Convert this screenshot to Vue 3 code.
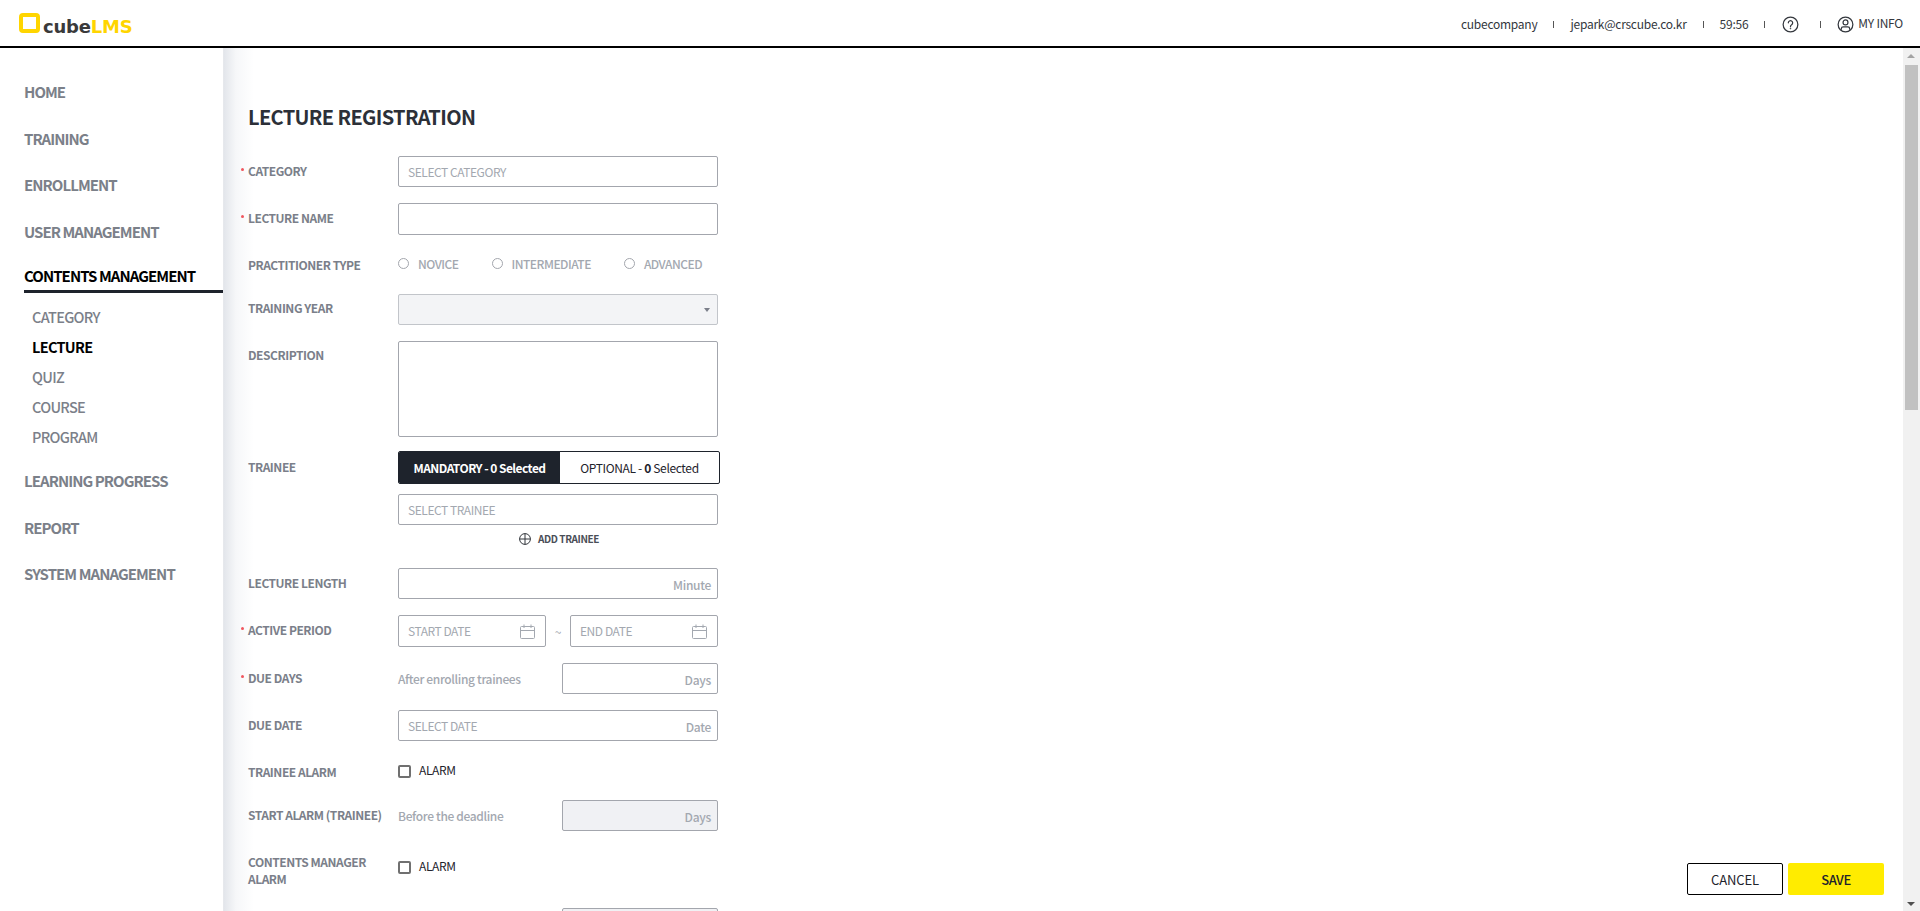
<template>
  <div class="app">
    <header class="topbar">
      <div class="logo">
        <span class="logo-mark"></span>
        <span class="logo-text">cube<b>LMS</b></span>
      </div>
      <div class="top-right">
        <span class="top-item">cubecompany</span>
        <i class="sep"></i>
        <span class="top-item">jepark@crscube.co.kr</span>
        <i class="sep"></i>
        <span class="top-item">59:56</span>
        <i class="sep"></i>
        <svg class="top-icon help" viewBox="0 0 18 18" fill="none" stroke="#33373d" stroke-width="1.3">
          <circle cx="9" cy="9" r="7.8" />
          <path d="M6.7 7.2a2.3 2.3 0 1 1 3.5 2c-.8.5-1.2 1-1.2 1.8v.3" stroke-linecap="round" />
          <circle cx="9" cy="13.3" r=".5" fill="#33373d" stroke-width=".6" />
        </svg>
        <i class="sep"></i>
        <span class="my-info">
          <svg class="top-icon" viewBox="0 0 18 18" fill="none" stroke="#33373d" stroke-width="1.3">
            <circle cx="9" cy="9" r="7.8" />
            <circle cx="9" cy="6.8" r="2.6" />
            <path d="M4.6 14.6v-1.2c0-1 .9-1.9 2-1.9h4.8c1.1 0 2 .9 2 1.9v1.2" />
          </svg>
          MY INFO
        </span>
      </div>
    </header>

    <div class="body">
      <nav class="sidebar">
        <template v-for="item in nav" :key="item.label">
          <a :class="['nav-item', { active: item.children }]">{{ item.label }}</a>
          <div v-if="item.children" class="sub-nav">
            <a
              v-for="sub in item.children"
              :key="sub"
              :class="['sub-item', { current: sub === 'LECTURE' }]"
            >{{ sub }}</a>
          </div>
        </template>
      </nav>

      <main class="content">
        <h1 class="title">LECTURE REGISTRATION</h1>

        <div class="row">
          <label class="lbl req">CATEGORY</label>
          <div class="box"><input placeholder="SELECT CATEGORY" /></div>
        </div>
        <div class="row tall">
          <label class="lbl req">LECTURE NAME</label>
          <div class="box"><input /></div>
        </div>
        <div class="row type-row">
          <label class="lbl">PRACTITIONER TYPE</label>
          <div class="radios">
            <span v-for="r in levels" :key="r" class="radio"><i></i>{{ r }}</span>
          </div>
        </div>
        <div class="row year-row">
          <label class="lbl">TRAINING YEAR</label>
          <div class="box disabled select"><span class="caret"></span></div>
        </div>
        <div class="row desc-row">
          <label class="lbl">DESCRIPTION</label>
          <div class="box area"></div>
        </div>
        <div class="row toggle-row">
          <label class="lbl">TRAINEE</label>
          <div class="toggle">
            <span class="tab on">MANDATORY - 0 Selected</span>
            <span class="tab">OPTIONAL - <b>0</b> Selected</span>
          </div>
        </div>
        <div class="row trainee-row">
          <span class="lbl"></span>
          <div class="box"><input placeholder="SELECT TRAINEE" /></div>
        </div>
        <div class="add-row">
          <svg viewBox="0 0 12 12" fill="none" stroke="#33373d" stroke-width="1">
            <circle cx="6" cy="6" r="5.4" />
            <path d="M6 .6v10.8M.6 6h10.8" />
          </svg>
          ADD TRAINEE
        </div>
        <div class="row">
          <label class="lbl">LECTURE LENGTH</label>
          <div class="box"><input /><span class="unit">Minute</span></div>
        </div>
        <div class="row tall">
          <label class="lbl req">ACTIVE PERIOD</label>
          <div class="dates">
            <div class="box">
              <input placeholder="START DATE" />
              <svg class="cal" viewBox="0 0 15 15" fill="none" stroke="#a3a8b0" stroke-width="1">
                <rect x=".5" y="2.5" width="14" height="12" rx="1" />
                <path d="M.5 6.5h14M4 .5v3.5M11 .5v3.5" />
              </svg>
            </div>
            <span class="tilde">~</span>
            <div class="box">
              <input placeholder="END DATE" />
              <svg class="cal" viewBox="0 0 15 15" fill="none" stroke="#a3a8b0" stroke-width="1">
                <rect x=".5" y="2.5" width="14" height="12" rx="1" />
                <path d="M.5 6.5h14M4 .5v3.5M11 .5v3.5" />
              </svg>
            </div>
          </div>
        </div>
        <div class="row">
          <label class="lbl req">DUE DAYS</label>
          <div class="split">
            <span class="hint">After enrolling trainees</span>
            <div class="box small"><input /><span class="unit">Days</span></div>
          </div>
        </div>
        <div class="row">
          <label class="lbl">DUE DATE</label>
          <div class="box"><input placeholder="SELECT DATE" /><span class="unit">Date</span></div>
        </div>
        <div class="row check-row">
          <label class="lbl">TRAINEE ALARM</label>
          <span class="check"><i></i>ALARM</span>
        </div>
        <div class="row">
          <label class="lbl">START ALARM (TRAINEE)</label>
          <div class="split">
            <span class="hint">Before the deadline</span>
            <div class="box small disabled"><input disabled /><span class="unit">Days</span></div>
          </div>
        </div>
        <div class="row manager-row">
          <label class="lbl">CONTENTS MANAGER<br />ALARM</label>
          <span class="check"><i></i>ALARM</span>
        </div>
        <div class="row">
          <span class="lbl"></span>
          <div class="split">
            <span class="hint"></span>
            <div class="box small disabled"></div>
          </div>
        </div>

        <div class="actions">
          <button class="btn cancel">CANCEL</button>
          <button class="btn save">SAVE</button>
        </div>

        <div class="scrollbar">
          <span class="arrow up"></span>
          <span class="thumb"></span>
          <span class="arrow down"></span>
        </div>
      </main>
    </div>
  </div>
</template>

<script setup>
const nav = [
  { label: 'HOME' },
  { label: 'TRAINING' },
  { label: 'ENROLLMENT' },
  { label: 'USER MANAGEMENT' },
  { label: 'CONTENTS MANAGEMENT', children: ['CATEGORY', 'LECTURE', 'QUIZ', 'COURSE', 'PROGRAM'] },
  { label: 'LEARNING PROGRESS' },
  { label: 'REPORT' },
  { label: 'SYSTEM MANAGEMENT' }
]

const levels = ['NOVICE', 'INTERMEDIATE', 'ADVANCED']
</script>

<style>
html, body { margin: 0; overflow: hidden; background: #fff; }
</style>

<style scoped>
.app {
  height: 911px;
  display: flex;
  flex-direction: column;
  overflow: hidden;
  font-family: "Noto Sans CJK KR", "Noto Sans", sans-serif;
  color: #2c3038;
}

.topbar {
  height: 46px;
  flex: none;
  border-bottom: 2px solid #000;
  display: flex;
  justify-content: space-between;
  align-items: center;
  padding: 0 17px 0 19px;
  background: #fff;
}
.logo { display: flex; align-items: center; gap: 3px; }
.logo-mark {
  width: 21px;
  height: 20px;
  box-sizing: border-box;
  border: 4px solid #ffd500;
  border-radius: 4px;
}
.logo-text {
  font-family: "DejaVu Sans", sans-serif;
  font-weight: 700;
  font-size: 18px;
  line-height: 20px;
  letter-spacing: -0.2px;
  color: #3a3a3a;
  margin-top: 7px;
}
.logo-text b { color: #ffd500; }

.top-right {
  display: flex;
  align-items: center;
  font-size: 12px;
  letter-spacing: -0.25px;
  color: #33373d;
}
.top-item { line-height: 18px; margin-top: 1px; }
.sep {
  width: 1px;
  height: 7px;
  background: #555;
  margin: 2px 16px 0;
}
.top-icon { width: 17px; height: 17px; flex: none; margin-top: 3px; }
.help { margin-right: 5px; margin-left: 1px; }
.my-info { display: flex; align-items: center; gap: 4px; line-height: 18px; }

.body { flex: 1; display: flex; min-height: 0; }

.sidebar {
  width: 223px;
  flex: none;
  box-sizing: border-box;
  padding-top: 21px;
  background: #fff;
}
.nav-item {
  display: block;
  height: 46.5px;
  line-height: 46px;
  margin-left: 24px;
  font-size: 15px;
  font-weight: 700;
  letter-spacing: -0.95px;
  color: #7b8089;
}
.nav-item.active {
  height: 38px;
  color: #000;
  border-bottom: 3px solid #1e232c;
  line-height: 42px;
  box-sizing: border-box;
}
.sub-nav { padding: 9px 0 6px 32px; }
.sub-item {
  display: block;
  height: 30px;
  line-height: 30px;
  font-size: 14.5px;
  font-weight: 500;
  letter-spacing: -0.7px;
  color: #7b8089;
}
.sub-item.current { color: #000; font-weight: 700; }

.content {
  flex: 1;
  min-width: 0;
  position: relative;
  overflow: hidden;
  padding-left: 24px;
  background: linear-gradient(90deg, #e3e6eb 0, #f6f7f9 12px, #fff 30px);
  border-left: 1px solid #e6e8ec;
}
.title {
  margin: 0;
  padding-top: 54px;
  height: 54px;
  line-height: 30px;
  font-size: 20px;
  font-weight: 700;
  color: #2c3038;
  letter-spacing: -0.65px;
}

.row {
  display: flex;
  align-items: center;
  height: 31px;
  margin-bottom: 16px;
}
.row.tall { height: 32px; }
.lbl {
  position: relative;
  width: 150px;
  flex: none;
  margin-top: -3px;
  font-size: 12px;
  font-weight: 700;
  line-height: 17px;
  letter-spacing: -0.47px;
  color: #7b7f8a;
}
.lbl.req::before {
  content: "";
  position: absolute;
  left: -7px;
  top: 6px;
  width: 3px;
  height: 3px;
  border-radius: 50%;
  background: #f0565e;
}

.box {
  width: 320px;
  height: 100%;
  box-sizing: border-box;
  border: 1px solid #a3a6ad;
  border-radius: 2px;
  display: flex;
  align-items: center;
  padding: 0 6px 0 9px;
  background: #fff;
}
.box input {
  flex: 1;
  min-width: 0;
  border: 0;
  outline: 0;
  padding: 0 0 1px;
  background: transparent;
  font: inherit;
  font-size: 12px;
  letter-spacing: -0.45px;
}
.box input::placeholder { color: #a3a8b0; opacity: 1; }
.box.disabled { background: #f3f4f6; border-color: #c2c5ca; }
.box.select { justify-content: flex-end; padding-right: 7px; }
.caret {
  width: 0;
  height: 0;
  border: 3.5px solid transparent;
  border-top: 4px solid #7b7f8a;
  border-bottom: 0;
}
.unit {
  font-size: 12px;
  font-weight: 500;
  letter-spacing: -0.3px;
  color: #a3a8b0;
  margin-top: 1px;
}

.type-row { height: 22px; margin-bottom: 22px; margin-top: -1px; }
.type-row .lbl { margin-top: 6px; }
.year-row .lbl { margin-top: -5px; }
.radios { display: flex; margin-top: 5px; }
.radio {
  display: flex;
  align-items: center;
  font-size: 12px;
  font-weight: 500;
  letter-spacing: -0.5px;
  color: #a3a8b0;
  margin-right: 33px;
}
.radio i {
  width: 11px;
  height: 11px;
  box-sizing: border-box;
  border: 1px solid #a3a6ad;
  border-radius: 50%;
  margin-right: 9px;
}

.desc-row {
  height: 96px;
  margin-bottom: 14px;
  align-items: flex-start;
}
.desc-row .lbl { margin-top: 5px; }
.box.area { height: 96px; }

.toggle-row { height: 33px; margin-bottom: 10px; }
.toggle {
  width: 322px;
  height: 33px;
  box-sizing: border-box;
  display: flex;
  border: 1px solid #1e232c;
  border-radius: 2px;
  overflow: hidden;
  font-size: 12px;
  letter-spacing: -0.35px;
}
.tab {
  flex: 1;
  display: flex;
  align-items: center;
  justify-content: center;
  white-space: pre;
  color: #1e232c;
}
.tab b { font-weight: 700; }
.tab.on { width: 161px; flex: none; background: #1e232c; color: #fff; font-weight: 700; letter-spacing: -0.55px; }

.trainee-row { margin-bottom: 6px; }
.add-row {
  height: 16px;
  margin: 0 0 21px 271px;
  display: flex;
  align-items: center;
  gap: 7px;
  font-size: 10px;
  font-weight: 700;
  letter-spacing: -0.4px;
  color: #4a4e57;
  line-height: 16px;
}
.add-row svg { width: 12px; height: 12px; }

.dates { width: 320px; height: 100%; display: flex; align-items: center; }
.dates .box { width: 148px; flex: none; padding-right: 10px; }
.cal { width: 15px; height: 15px; flex: none; }
.tilde {
  flex: 1;
  text-align: center;
  font-size: 12px;
  color: #a3a8b0;
}

.split {
  width: 320px;
  height: 100%;
  display: flex;
  align-items: center;
  justify-content: space-between;
}
.hint {
  font-size: 12px;
  font-weight: 500;
  letter-spacing: -0.35px;
  color: #a3a8b0;
}
.box.small { width: 156px; flex: none; }
.box.small.disabled { background: #f0f1f4; border-color: #a3a6ad; }

.check-row { height: 28px; margin-bottom: 15px; }
.check-row .lbl { margin-top: 0; }
.check {
  display: flex;
  align-items: center;
  font-size: 12px;
  letter-spacing: -0.4px;
  color: #1e232c;
  line-height: 16px;
  margin-top: -2px;
}
.check i {
  width: 13px;
  height: 13px;
  box-sizing: border-box;
  border: 2px solid #707070;
  border-radius: 2px;
  margin: 3px 8px 0 0;
}
.manager-row { height: 40px; margin: 0 0 21px; }
.manager-row .lbl { margin-top: 6px; }

.actions {
  position: absolute;
  right: 36px;
  top: 815px;
  display: flex;
  gap: 5px;
}
.btn {
  width: 96px;
  height: 32px;
  box-sizing: border-box;
  border-radius: 2px;
  font: inherit;
  font-size: 13px;
  letter-spacing: -0.1px;
  color: #1e232c;
  padding: 0;
}
.cancel { background: #fff; border: 1px solid #000; }
.save { background: #ffec00; border: 0; font-weight: 500; letter-spacing: -0.4px; }

.scrollbar {
  position: absolute;
  right: 0;
  top: 0;
  bottom: 0;
  width: 17px;
  background: #f1f1f1;
}
.thumb {
  position: absolute;
  left: 2px;
  top: 17px;
  width: 13px;
  height: 345px;
  background: #c1c1c1;
}
.arrow {
  position: absolute;
  left: 4px;
  width: 0;
  height: 0;
  border-left: 4px solid transparent;
  border-right: 4px solid transparent;
}
.arrow.up { top: 6px; border-bottom: 4px solid #a3a3a3; }
.arrow.down { bottom: 5px; border-top: 4px solid #505050; }
</style>
